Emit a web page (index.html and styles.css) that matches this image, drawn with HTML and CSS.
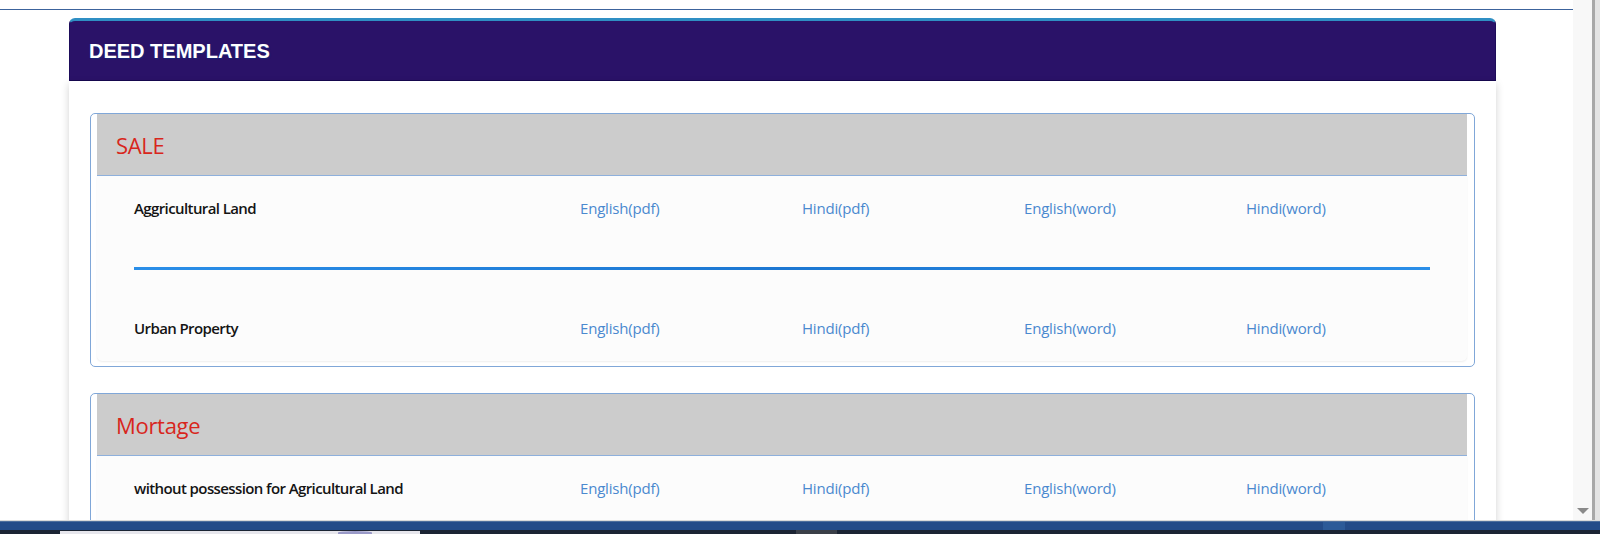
FILE: index.html
```html
<!DOCTYPE html>
<html lang="en">
<head>
<meta charset="utf-8">
<title>Deed Templates</title>
<link rel="stylesheet" href="styles.css">
</head>
<body>
<div class="screen">
  <div class="window">
    <div class="viewport">
      <div class="topline"></div>
      <div class="card">
        <div class="card-head"><h1 class="card-title">DEED TEMPLATES</h1></div>
        <div class="card-body">
          <div class="section">
            <div class="sec-head"><h2 class="sec-title">SALE</h2></div>
            <div class="sec-body">
              <div class="row">
                <span class="label">Aggricultural Land</span>
                <a class="link" href="#">English(pdf)</a>
                <a class="link" href="#">Hindi(pdf)</a>
                <a class="link" href="#">English(word)</a>
                <a class="link" href="#">Hindi(word)</a>
              </div>
              <div class="divider"></div>
              <div class="row">
                <span class="label">Urban Property</span>
                <a class="link" href="#">English(pdf)</a>
                <a class="link" href="#">Hindi(pdf)</a>
                <a class="link" href="#">English(word)</a>
                <a class="link" href="#">Hindi(word)</a>
              </div>
            </div>
          </div>
          <div class="section">
            <div class="sec-head"><h2 class="sec-title">Mortage</h2></div>
            <div class="sec-body">
              <div class="row">
                <span class="label">without possession for Agricultural Land</span>
                <a class="link" href="#">English(pdf)</a>
                <a class="link" href="#">Hindi(pdf)</a>
                <a class="link" href="#">English(word)</a>
                <a class="link" href="#">Hindi(word)</a>
              </div>
            </div>
          </div>
        </div>
      </div>
    </div>
    <div class="scrollbar">
      <div class="track"><span class="arrow"></span></div>
      <div class="frame"></div>
    </div>
  </div>
  <div class="taskbar">
    <div class="task-blue">
      <span class="tb-patch"></span>
    </div>
    <div class="task-dark">
      <span class="tb-window"><span class="tb-blob"></span></span>
      <span class="tb-gray"></span>
    </div>
  </div>
</div>
</body>
</html>
```
FILE: styles.css
```css
* { box-sizing: border-box; }
html, body { margin: 0; padding: 0; background: #ffffff; }
body { font-family: "Open Sans", "Noto Sans", sans-serif; overflow: hidden; }

.screen { width: 1600px; height: 534px; display: flex; flex-direction: column; }
.window { height: 521px; display: flex; overflow: hidden; border-bottom: 1px solid #d8d8d8; }
.viewport { width: 1573px; height: 520px; overflow: hidden; background: #ffffff; }

.topline { height: 10px; border-bottom: 1px solid #3c639c; }

.card { margin: 8px 0 0 69px; width: 1427px; }
.card-head {
  height: 63px;
  background: #2a1268;
  border-top: 3px solid #2f8fc4;
  border-left: 1px solid #1d0c5a;
  border-right: 1px solid #1d0c5a;
  border-bottom: 1px solid #160850;
  border-radius: 6px 6px 0 0;
  display: flex;
  align-items: center;
  padding-left: 19px;
  padding-top: 2px;
}
.card-title {
  margin: 0;
  font-family: "Liberation Sans", Arial, sans-serif;
  font-weight: bold;
  font-size: 20px;
  color: #ffffff;
  text-shadow: 1px 1px 1px rgba(20, 40, 120, 0.9);
}
.card-body {
  background: #ffffff;
  padding: 32px 21px 40px 21px;
  box-shadow: 0 3px 8px rgba(0, 0, 0, 0.18);
  min-height: 460px;
}

.section {
  border: 1px solid #80a7d8;
  border-radius: 5px;
  padding: 0 7px 5px 6px;
  margin-bottom: 26px;
}
.sec-head {
  height: 62px;
  background: #cccccc;
  border-bottom: 1px solid #8eb0dc;
  display: flex;
  align-items: center;
  padding-left: 19px;
}
.sec-title {
  margin: 0;
  font-weight: 400;
  font-size: 22px;
  color: #d8261c;
  letter-spacing: -0.3px;
}
.sec-body {
  background: #fcfcfc;
  border-radius: 0 0 5px 5px;
  box-shadow: 0 1px 2px rgba(0, 0, 0, 0.07);
  padding: 22px 37px 23px 37px;
  min-height: 80px;
}
.row {
  display: grid;
  grid-template-columns: 446px 222px 222px 222px 1fr;
  height: 20px;
  line-height: 20px;
  align-items: center;
}
.label {
  font-size: 15px;
  font-weight: 600;
  color: #141414;
  letter-spacing: -0.6px;
}
.link {
  font-size: 15px;
  color: #4a89cf;
  text-decoration: none;
  letter-spacing: -0.2px;
}
.divider {
  height: 3px;
  margin: 49px 0 48px 0;
  background: linear-gradient(90deg, #2a8ee8 0%, #1c77d2 50%, #2a8ee8 100%);
}

.scrollbar { flex: 1; display: flex; height: 520px; }
.track {
  width: 19px;
  background: #f8f8f8;
  display: flex;
  align-items: flex-end;
  justify-content: center;
  padding-bottom: 6px;
}
.arrow {
  width: 0; height: 0;
  border-left: 6px solid transparent;
  border-right: 6px solid transparent;
  border-top: 6px solid #8a8a8a;
}
.frame { flex: 1; background: #e4e4e4; border-left: 3px solid #a8a8a8; }

.taskbar { flex: 1; display: flex; flex-direction: column; }
.task-blue { height: 9px; background: #234b88; border-top: 1px solid #4d6e9c; position: relative; }
.tb-patch { position: absolute; left: 1323px; top: 0; width: 22px; height: 8px; background: #2c5a98; }
.task-dark { flex: 1; background: #1b2433; position: relative; }
.tb-window { position: absolute; left: 60px; top: 1px; width: 360px; height: 3px; background: #e6e6ec; }
.tb-blob { position: absolute; left: 278px; top: 0; width: 34px; height: 3px; background: #9a9ac8; border-radius: 50% 50% 0 0; }
.tb-gray { position: absolute; left: 796px; top: 0; width: 41px; height: 4px; background: #3a3f48; }
```
